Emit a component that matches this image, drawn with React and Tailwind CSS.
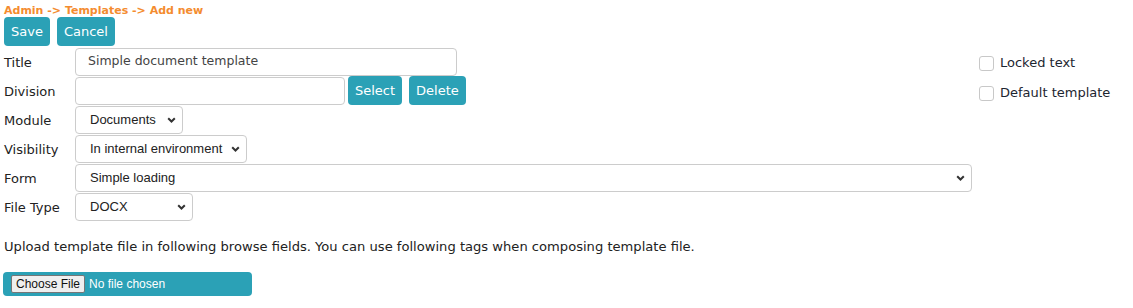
import React from 'react';

const font = { fontFamily: '"DejaVu Sans", Verdana, sans-serif' };

function Chevron() {
  return (
    <svg width="9" height="6" viewBox="0 0 9 6" className="shrink-0">
      <path d="M1.2 1.2 L4.5 4.5 L7.8 1.2" fill="none" stroke="#333" strokeWidth="2" />
    </svg>
  );
}

function FakeSelect({ value, width }) {
  return (
    <div
      className={`flex h-[28px] items-center justify-between rounded-[4px] border border-[#cccccc] bg-white pl-[14px] pr-[6px] text-[13px] text-[#222] ${width}`}
      style={{ fontFamily: '"Liberation Sans", Arial, sans-serif' }}
    >
      <span>{value}</span>
      <Chevron />
    </div>
  );
}

function Btn({ children, className = '' }) {
  return (
    <button
      type="button"
      className={`h-[29px] rounded-[4px] bg-[#2ba1b6] px-[7px] text-[13px] text-white ${className}`}
    >
      {children}
    </button>
  );
}

function Row({ label, children }) {
  return (
    <div className="flex h-[29px] items-center">
      <div className="w-[71px] pt-[2px] text-[13px] text-[#222]">{label}</div>
      {children}
    </div>
  );
}

function Check({ label }) {
  return (
    <label className="flex h-[30px] items-center gap-[6px] text-[13px] text-[#1c2530]">
      <span className="h-[15px] w-[15px] rounded-[3px] border border-[#c8c8c8] bg-white" />
      {label}
    </label>
  );
}

export default function App() {
  return (
    <div className="min-h-[308px] bg-white px-[4px] pt-[4px]" style={font}>
      <div className="text-[11px] font-bold leading-[13px] text-[#f48c2f]">
        Admin -&gt; Templates -&gt; Add new
      </div>
      <div className="flex gap-[7px]">
        <Btn>Save</Btn>
        <Btn>Cancel</Btn>
      </div>
      <div className="mt-[1px] flex">
        <div className="w-[971px]">
          <Row label="Title">
            <div className="flex h-[28px] w-[382px] items-center rounded-[4px] border border-[#cccccc] px-[12px] text-[12.5px] text-[#444]">
              Simple document template
            </div>
          </Row>
          <Row label="Division">
            <div className="h-[28px] w-[270px] rounded-[4px] border border-[#cccccc]" />
            <Btn className="ml-[3px]">Select</Btn>
            <Btn className="ml-[7px]">Delete</Btn>
          </Row>
          <Row label="Module">
            <FakeSelect value="Documents" width="w-[108px]" />
          </Row>
          <Row label="Visibility">
            <FakeSelect value="In internal environment" width="w-[172px]" />
          </Row>
          <Row label="Form">
            <FakeSelect value="Simple loading" width="w-[897px]" />
          </Row>
          <Row label="File Type">
            <FakeSelect value="DOCX" width="w-[118px]" />
          </Row>
        </div>
        <div className="ml-[4px] pt-[1px]">
          <Check label="Locked text" />
          <Check label="Default template" />
        </div>
      </div>
      <p className="mt-[16px] text-[13.1px] text-[#222]">
        Upload template file in following browse fields. You can use following tags when composing template file.
      </p>
      <div
        className="ml-[-1px] mt-[15px] flex h-[24px] w-[249px] items-center rounded-[4px] bg-[#2ba1b6] pl-[8px] text-[12px] text-white"
        style={{ fontFamily: '"Liberation Sans", Arial, sans-serif' }}
      >
        <span className="flex h-[18px] items-center rounded-[2px] border border-[#767676] bg-[#efefef] px-[4px] text-[#111]">
          Choose File
        </span>
        <span className="ml-[4px]">No file chosen</span>
      </div>
    </div>
  );
}
